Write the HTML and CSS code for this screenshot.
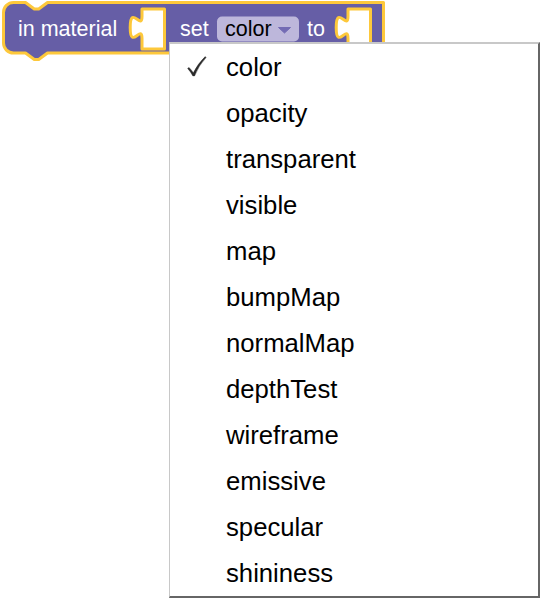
FILE: index.html
```html
<!DOCTYPE html>
<html lang="en">
<head>
<meta charset="utf-8">
<title>Blockly material block</title>
<link rel="stylesheet" href="styles.css">
</head>
<body>
<div class="workspace">
  <svg class="block" width="400" height="70" viewBox="0 0 400 70" xmlns="http://www.w3.org/2000/svg">
    <path class="block-path" fill-rule="evenodd" d="
      M 3.5 12.5 A 10 10 0 0 1 13.5 2.5 H 25.5 l 8.8 6.5 4.4 0 8.8 -6.5 H 383.5 V 53 H 47.5 l -8.8 6.5 -4.4 0 -8.8 -6.5 H 13.5 A 10 10 0 0 1 3.5 43 Z
      M 142 9 V 16.4 c 0 14.7 -11.8 -12.5 -11.8 11 s 11.8 -3.7 11.8 11 V 49 H 164.5 V 9 Z
      M 348 9 V 16.4 c 0 14.7 -11.8 -12.5 -11.8 11 s 11.8 -3.7 11.8 11 V 49 H 370.5 V 9 Z"/>
    <rect class="dropdown" x="217" y="16.5" width="82" height="25" rx="5" ry="5"/>
    <text class="label" x="18" y="36">in material</text>
    <text class="label" x="180" y="36">set</text>
    <text class="dropdown-text" x="225" y="36">color</text>
    <polygon class="dropdown-arrow" points="278.5,27.5 290.5,27.5 284.5,33"/>
    <text class="label" x="307" y="36">to</text>
  </svg>

  <div class="menu">
    <div class="item checked">
      <div class="gutter">
        <svg class="check" width="56" height="46" viewBox="0 0 56 46" xmlns="http://www.w3.org/2000/svg">
          <path d="M 17.6 24.4 L 19 23.4 Q 21.6 26 23.3 28.8 Q 27.6 20 35.2 12.6 L 36.1 13.5 Q 28.6 21.6 24.6 31.9 L 22.8 31.9 Q 20.6 27.6 17.6 24.4 Z"/>
        </svg>
      </div>
      <span class="text">color</span>
    </div>
    <div class="item"><div class="gutter"></div><span class="text">opacity</span></div>
    <div class="item"><div class="gutter"></div><span class="text">transparent</span></div>
    <div class="item"><div class="gutter"></div><span class="text">visible</span></div>
    <div class="item"><div class="gutter"></div><span class="text">map</span></div>
    <div class="item"><div class="gutter"></div><span class="text">bumpMap</span></div>
    <div class="item"><div class="gutter"></div><span class="text">normalMap</span></div>
    <div class="item"><div class="gutter"></div><span class="text">depthTest</span></div>
    <div class="item"><div class="gutter"></div><span class="text">wireframe</span></div>
    <div class="item"><div class="gutter"></div><span class="text">emissive</span></div>
    <div class="item"><div class="gutter"></div><span class="text">specular</span></div>
    <div class="item"><div class="gutter"></div><span class="text">shininess</span></div>
  </div>
</div>
</body>
</html>
```

FILE: styles.css
```css
html, body {
  margin: 0;
  padding: 0;
  background: #ffffff;
  overflow: hidden;
}

.workspace {
  position: relative;
  width: 540px;
  height: 598px;
  font-family: "Liberation Sans", Arial, Helvetica, sans-serif;
}

.block {
  position: absolute;
  left: 0;
  top: 0;
  display: block;
}

.block-path {
  fill: #665ea6;
  stroke: #fdc83b;
  stroke-width: 3;
  stroke-linejoin: round;
}

.dropdown {
  fill: #bdb7db;
}

.label {
  fill: #ffffff;
  font-family: "Liberation Sans", Arial, sans-serif;
  font-size: 21.5px;
}

.dropdown-text {
  fill: #000000;
  font-family: "Liberation Sans", Arial, sans-serif;
  font-size: 21.5px;
}

.dropdown-arrow {
  fill: #736bb4;
  stroke: #736bb4;
  stroke-width: 1;
  stroke-linejoin: round;
}

.menu {
  position: absolute;
  left: 169px;
  top: 42px;
  width: 368px;
  background: #ffffff;
  border-style: solid;
  border-width: 2px 2px 2px 1px;
  border-color: #c8c8c8 #666666 #666666 #c8c8c8;
  display: flex;
  flex-direction: column;
}

.item {
  display: flex;
  align-items: center;
  height: 46px;
  font-size: 25.7px;
  line-height: 46px;
  color: #000000;
}

.gutter {
  width: 56px;
  height: 46px;
  flex: none;
}

.check {
  display: block;
}

.check path {
  fill: #2b2b2b;
  stroke: #2b2b2b;
  stroke-width: 0.4;
  stroke-linejoin: round;
}

.text {
  white-space: nowrap;
}
```
